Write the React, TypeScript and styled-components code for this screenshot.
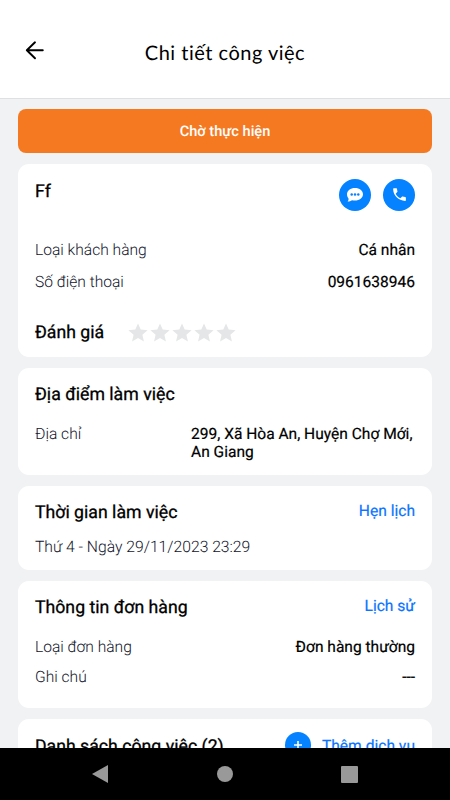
import React from 'react';
import styled, { createGlobalStyle } from 'styled-components';

const GlobalStyle = createGlobalStyle`
  * { box-sizing: border-box; }
  html, body { margin: 0; padding: 0; overflow: hidden; }
  body {
    font-family: Roboto, "Noto Sans", sans-serif;
    color: #000;
    text-rendering: geometricPrecision;
  }
`;

const Screen = styled.div`
  width: 450px;
  height: 800px;
  display: flex;
  flex-direction: column;
  overflow: hidden;
  background: #f1f2f4;
`;

const Header = styled.header`
  height: 99px;
  flex: none;
  display: grid;
  grid-template-columns: 70px 310px 70px;
  padding-top: 29px;
  background: #fff;
  border-bottom: 1px solid #dfe0e1;
`;

const BackButton = styled.button`
  width: 24px;
  height: 24px;
  margin: 9px 0 0 23px;
  padding: 0;
  border: 0;
  background: none;
  svg { display: block; }
`;

const PageTitle = styled.h1`
  margin: 0;
  font: 400 20px/49px Lato, sans-serif;
  letter-spacing: 0.5px;
  text-align: center;
  white-space: nowrap;
`;

const Content = styled.main`
  flex: 1;
  min-height: 0;
  overflow: hidden;
  display: flex;
  flex-direction: column;
  gap: 11px;
  padding: 10.4px 17.6px 0;
`;

const Status = styled.div`
  height: 43.6px;
  flex: none;
  border-radius: 8px;
  background: #f57921;
  color: #fff;
  font-size: 14.6px;
  font-weight: 500;
  line-height: 45px;
  text-align: center;
`;

const Card = styled.section<{ $height: number }>`
  height: ${(p) => p.$height}px;
  flex: none;
  padding: 0 17.4px;
  border-radius: 11px;
  background: #fff;
`;

const Row = styled.div<{ $top?: number; $height?: number }>`
  display: flex;
  justify-content: space-between;
  margin-top: ${(p) => p.$top ?? 0}px;
  height: ${(p) => p.$height ?? 20}px;
  line-height: 20px;
  white-space: nowrap;
`;

const Heading = styled.h2`
  margin: 0;
  font-size: 17.7px;
  font-weight: 450;
  line-height: 20px;
  -webkit-text-stroke: 0.3px currentColor;
`;

const Name = styled(Heading)`
  margin-top: 18px;
  font-weight: 400;
`;

const Label = styled.span`
  font-size: 15.6px;
  font-weight: 300;
  color: #10142a;
`;

const DateText = styled(Label)`
  font-size: 15.7px;
`;

const Value = styled.span`
  font-size: 15.55px;
  font-weight: 450;
  -webkit-text-stroke: 0.2px currentColor;
`;

const Address = styled(Value)`
  width: 224px;
  line-height: 18px;
  padding-top: 1px;
`;

const Link = styled.a`
  font-size: 15.6px;
  color: #0a74ff;
  -webkit-text-stroke: 0.2px currentColor;
`;

const Actions = styled.div`
  display: flex;
  gap: 12px;
`;

const RoundButton = styled.button<{ $size: number }>`
  width: ${(p) => p.$size}px;
  height: ${(p) => p.$size}px;
  padding: 0;
  border: 0;
  border-radius: 50%;
  background: #0582ff;
  display: flex;
  align-items: center;
  justify-content: center;
`;

const Rating = styled.div`
  display: flex;
  margin-top: 31.2px;
`;

const Stars = styled.div`
  display: flex;
  gap: 2px;
  margin-left: 23.4px;
`;

const AddService = styled.div`
  display: flex;
  gap: 11px;
`;

const NavBar = styled.nav`
  height: 52px;
  flex: none;
  display: grid;
  grid-template-columns: repeat(3, 125px);
  justify-content: center;
  align-items: center;
  justify-items: center;
  background: #000;
  padding-right: 1px;
`;

const Star = () => (
  <svg width="20" height="20" viewBox="0 0 20 20" fill="#e5e6e7">
    <path d="M10 .4l2.700 6.200 6.900.6-5.200 4.500 1.550 6.750L10 14.900l-5.950 3.550 1.550-6.750L.4 7.200l6.900-.6z" />
  </svg>
);

export default function App() {
  return (
    <>
      <GlobalStyle />
      <Screen>
        <Header>
          <BackButton aria-label="Quay lại">
            <svg width="24" height="24" viewBox="0 0 24 24" fill="none" stroke="#000" strokeWidth="1.9" strokeLinecap="round" strokeLinejoin="round">
              <path d="M19.800 12.300H3.800M12 4.300l-8.200 8 8.200 8" />
            </svg>
          </BackButton>
          <PageTitle>Chi tiết công việc</PageTitle>
        </Header>
        <Content>
          <Status>Chờ thực hiện</Status>

          <Card $height={193}>
            <Row $height={76.2}>
              <Name>Ff</Name>
              <Row $top={14.8} $height={32}>
                <Actions>
                  <RoundButton $size={32} aria-label="Nhắn tin">
                    <svg width="18" height="18" viewBox="0 0 18 18">
                      <path fill="#fff" d="M9 2c4.500 0 8 2.700 8 6.300s-3.500 6.300-8 6.300c-1.100 0-2.100-.1-3-.4-1.200.9-2.600 1.400-4.400 1.400.9-1 1.100-2 .9-3.100C1.500 11.400 1 9.900 1 8.300 1 4.700 4.500 2 9 2z" />
                      <g fill="#0582ff">
                        <circle cx="5.700" cy="8.400" r="1.250" />
                        <circle cx="9" cy="8.400" r="1.250" />
                        <circle cx="12.300" cy="8.400" r="1.250" />
                      </g>
                    </svg>
                  </RoundButton>
                  <RoundButton $size={32} aria-label="Gọi điện">
                    <svg width="17" height="17" viewBox="0 0 24 24" fill="#fff">
                      <path d="M6.620 10.790c1.440 2.830 3.760 5.140 6.590 6.590l2.200-2.200c.27-.27.67-.36 1.020-.24 1.120.37 2.330.57 3.570.57.55 0 1 .45 1 1V20c0 .55-.45 1-1 1C10.610 21 3 13.390 3 4c0-.55.45-1 1-1h3.500c.55 0 1 .45 1 1 0 1.250.2 2.450.57 3.570.11.35.03.74-.25 1.020l-2.200 2.200z" />
                    </svg>
                  </RoundButton>
                </Actions>
              </Row>
            </Row>
            <Row>
              <Label>Loại khách hàng</Label>
              <Value>Cá nhân</Value>
            </Row>
            <Row $top={12}>
              <Label>Số điện thoại</Label>
              <Value>0961638946</Value>
            </Row>
            <Rating>
              <Heading>Đánh giá</Heading>
              <Stars>
                <Star /><Star /><Star /><Star /><Star />
              </Stars>
            </Rating>
          </Card>

          <Card $height={107}>
            <Row $height={56.2}>
              <Row $top={17}><Heading>Địa điểm làm việc</Heading></Row>
            </Row>
            <Row $height={38}>
              <Label>Địa chỉ</Label>
              <Address>299, Xã Hòa An, Huyện Chợ Mới,<br />An Giang</Address>
            </Row>
          </Card>

          <Card $height={84}>
            <Row $height={51.2}>
              <Row $top={17}><Heading>Thời gian làm việc</Heading></Row>
              <Row $top={15.2}><Link>Hẹn lịch</Link></Row>
            </Row>
            <Row><DateText>Thứ 4 - Ngày 29/11/2023 23:29</DateText></Row>
          </Card>

          <Card $height={127}>
            <Row $height={56.2}>
              <Row $top={17}><Heading>Thông tin đơn hàng</Heading></Row>
              <Row $top={15.2}><Link>Lịch sử</Link></Row>
            </Row>
            <Row>
              <Label>Loại đơn hàng</Label>
              <Value>Đơn hàng thường</Value>
            </Row>
            <Row $top={10}>
              <Label>Ghi chú</Label>
              <Value>---</Value>
            </Row>
          </Card>

          <Card $height={100}>
            <Row $height={56}>
              <Row $top={18}><Heading>Danh sách công việc (2)</Heading></Row>
              <Row $top={13.5}>
                <AddService>
                  <RoundButton $size={26} aria-label="Thêm">
                    <svg width="12" height="12" viewBox="0 0 12 12" stroke="#fff" strokeWidth="1.600">
                      <path d="M6 2v8M2 6h8" />
                    </svg>
                  </RoundButton>
                  <Row $top={4}><Link>Thêm dịch vụ</Link></Row>
                </AddService>
              </Row>
            </Row>
          </Card>
        </Content>
        <NavBar>
          <svg width="16" height="18" viewBox="0 0 16 18" fill="#999"><path d="M0 9L16 0v18z" /></svg>
          <svg width="16" height="16" viewBox="0 0 16 16" fill="#999"><circle cx="8" cy="8" r="8" /></svg>
          <svg width="17" height="17" viewBox="0 0 17 17" fill="#999"><rect width="17" height="17" rx="1" /></svg>
        </NavBar>
      </Screen>
    </>
  );
}
